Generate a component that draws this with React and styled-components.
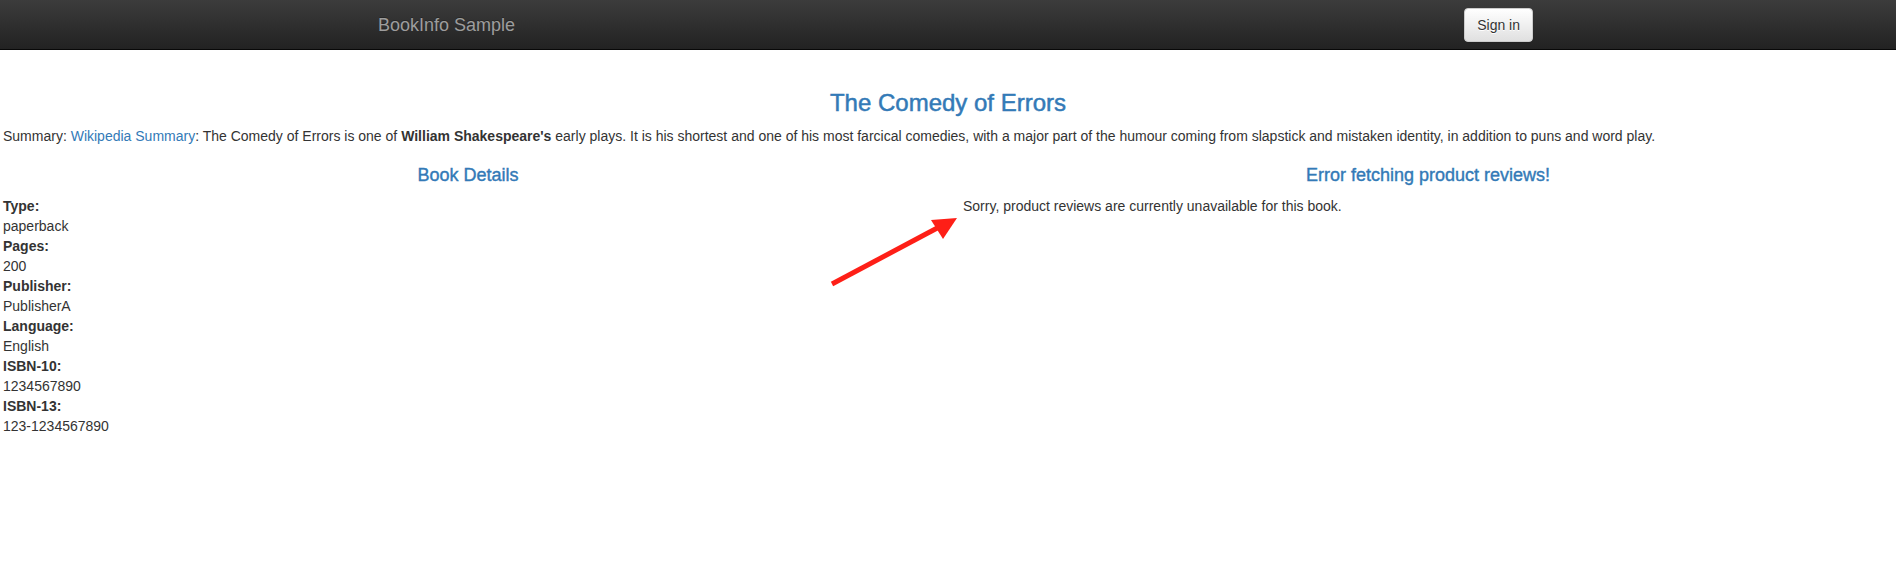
import React from "react";
import styled, { createGlobalStyle } from "styled-components";

const GlobalStyle = createGlobalStyle`
  * {
    box-sizing: border-box;
  }
  body {
    margin: 0;
    font-family: "Liberation Sans", Helvetica, Arial, sans-serif;
    font-size: 14px;
    line-height: 1.42857143;
    color: #333;
    background: #fff;
  }
`;

const Page = styled.div`
  position: relative;
  min-height: 569px;
`;

const Navbar = styled.nav`
  height: 50px;
  margin-bottom: 20px;
  background-image: linear-gradient(to bottom, #3c3c3c 0, #222 100%);
  border-bottom: 1px solid #080808;
`;

const NavContainer = styled.div`
  width: 1170px;
  margin: 0 auto;
  padding: 0 15px;
  display: flex;
  justify-content: space-between;
  align-items: flex-start;
`;

const Brand = styled.a`
  margin-left: -15px;
  padding: 15px;
  font-size: 18px;
  line-height: 20px;
  color: #9d9d9d;
  text-decoration: none;
  text-shadow: 0 -1px 0 rgba(0, 0, 0, 0.25);
`;

const NavRight = styled.div`
  margin-right: -15px;
`;

const SignIn = styled.button`
  margin-top: 8px;
  height: 34px;
  padding: 6px 12px;
  font-family: inherit;
  font-size: 14px;
  line-height: 20px;
  color: #333;
  background-image: linear-gradient(to bottom, #fff 0, #e0e0e0 100%);
  border: 1px solid #ccc;
  border-radius: 4px;
  text-shadow: 0 1px 0 #fff;
  box-shadow: inset 0 1px 0 rgba(255, 255, 255, 0.15), 0 1px 1px rgba(0, 0, 0, 0.075);
  cursor: pointer;
`;

const Main = styled.main`
  display: flow-root;
  padding: 0 3px;
`;

const Title = styled.h3`
  margin: 20px 0 10px;
  font-size: 24px;
  font-weight: 500;
  line-height: 1.1;
  text-align: center;
  color: #337ab7;
  -webkit-text-stroke: 0.5px #337ab7;
`;

const Summary = styled.p`
  margin: 0 0 10px;

  a {
    color: #337ab7;
    text-decoration: none;
  }
`;

const Columns = styled.div`
  display: grid;
  grid-template-columns: 1fr 1fr;
  column-gap: 30px;
`;

const ColumnTitle = styled.h4`
  margin: 10px 0;
  font-size: 18px;
  font-weight: 500;
  line-height: 1.1;
  text-align: center;
  color: #337ab7;
  -webkit-text-stroke: 0.4px #337ab7;
`;

const Details = styled.dl`
  margin: 0;

  dt {
    font-weight: bold;
  }
  dd {
    margin: 0;
  }
`;

const Message = styled.p`
  margin: 0;
`;

const Arrow = styled.svg`
  position: absolute;
  left: 825px;
  top: 212px;
  pointer-events: none;
`;

const details = [
  ["Type:", "paperback"],
  ["Pages:", "200"],
  ["Publisher:", "PublisherA"],
  ["Language:", "English"],
  ["ISBN-10:", "1234567890"],
  ["ISBN-13:", "123-1234567890"],
];

const App = () => {
  return (
    <Page>
      <GlobalStyle />
      <Navbar>
        <NavContainer>
          <Brand href="#">BookInfo Sample</Brand>
          <NavRight>
            <SignIn type="button">Sign in</SignIn>
          </NavRight>
        </NavContainer>
      </Navbar>

      <Main>
        <Title>The Comedy of Errors</Title>
        <Summary>
          Summary: <a href="#">Wikipedia Summary</a>: The Comedy of Errors is one of{" "}
          <b>William Shakespeare's</b> early plays. It is his shortest and one of his most
          farcical comedies, with a major part of the humour coming from slapstick and mistaken
          identity, in addition to puns and word play.
        </Summary>

        <Columns>
          <div>
            <ColumnTitle>Book Details</ColumnTitle>
            <Details>
              {details.map(([k, v]) => (
                <React.Fragment key={k}>
                  <dt>{k}</dt>
                  <dd>{v}</dd>
                </React.Fragment>
              ))}
            </Details>
          </div>
          <div>
            <ColumnTitle>Error fetching product reviews!</ColumnTitle>
            <Message>Sorry, product reviews are currently unavailable for this book.</Message>
          </div>
        </Columns>
      </Main>

      {/* red annotation arrow */}
      <Arrow width="140" height="80" viewBox="0 0 140 80">
        <line x1="7" y1="72" x2="116" y2="14" stroke="#fe1f17" strokeWidth="5" strokeLinecap="butt" />
        <polygon points="132,6 106,8 118,27" fill="#fe1f17" />
      </Arrow>
    </Page>
  );
};

export default App;
